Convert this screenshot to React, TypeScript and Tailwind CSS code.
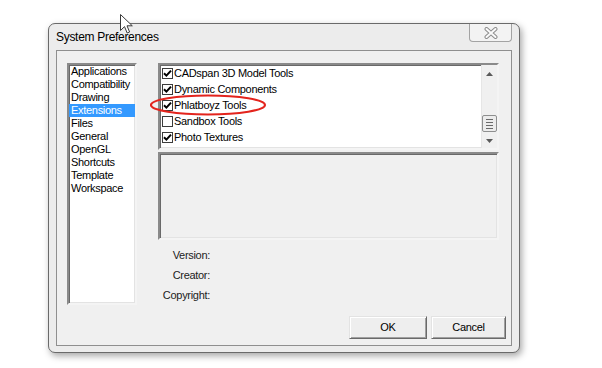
import React from "react";

const sunken =
  "border-2 border-t-[#8a8a8a] border-l-[#8a8a8a] border-b-[#f4f4f4] border-r-[#f4f4f4] shadow-[inset_1px_1px_0_#696969,inset_-1px_-1px_0_#e3e3e3]";

function Check({ on }: { on: boolean }) {
  return (
    <div className="w-[11px] h-[11px] bg-white border border-[#3c3c3c] flex items-center justify-center shrink-0">
      {on && (
        <svg width="9" height="9" viewBox="0 0 9 9">
          <path d="M1 4.2 L3.4 6.6 L8 1.6" stroke="#000" strokeWidth="2" fill="none" />
        </svg>
      )}
    </div>
  );
}

function Btn({ label, w }: { label: string; w: string }) {
  return (
    <div
      className={`${w} h-[23px] flex items-center justify-center text-[11px] text-black bg-[#eeeeee] border border-t-[#e3e3e3] border-l-[#e3e3e3] border-b-[#696969] border-r-[#696969] shadow-[inset_1px_1px_0_#ffffff,inset_-1px_-1px_0_#a0a0a0]`}
    >
      {label}
    </div>
  );
}

export default function App() {
  const left = [
    "Applications",
    "Compatibility",
    "Drawing",
    "Extensions",
    "Files",
    "General",
    "OpenGL",
    "Shortcuts",
    "Template",
    "Workspace",
  ];
  const exts: [string, boolean][] = [
    ["CADspan 3D Model Tools", true],
    ["Dynamic Components", true],
    ["Phlatboyz Tools", true],
    ["Sandbox Tools", false],
    ["Photo Textures", true],
  ];
  return (
    <div className="relative w-[602px] h-[368px] bg-white overflow-hidden font-['Liberation_Sans',Arial,sans-serif] tracking-[-0.3px]">
      <div className="pt-[23px] pl-[48px]">
        <div className="w-[472px] h-[330px] rounded-[7px] border border-[#6a6a6a] bg-[#ececec] shadow-[2px_3px_7px_rgba(0,0,0,0.35)] flex flex-col px-[7px] pb-[6px]">
          {/* title bar */}
          <div className="h-[26px] flex items-start justify-between">
            <span className="mt-[6px] text-[12px] leading-[15px] text-black">System Preferences</span>
            <div className="w-[43px] h-[18px] border border-t-0 border-[#a3a3a3] rounded-b-[4px] bg-[#f3f3f3] flex items-center justify-center">
              <svg width="14" height="12" viewBox="0 0 14 12">
                <path d="M2.5 2 L11.5 10 M11.5 2 L2.5 10" stroke="#8d8d8d" strokeWidth="4" strokeLinecap="round" />
                <path d="M2.5 2 L11.5 10 M11.5 2 L2.5 10" stroke="#fafafa" strokeWidth="2" strokeLinecap="round" />
              </svg>
            </div>
          </div>
          {/* client */}
          <div className="flex-1 border border-[#8f8f8f] bg-[#f0f0f0] flex flex-col pl-[10px] pt-[12px] pr-[5px]">
            <div className="flex gap-[21px]">
              <div className={`w-[70px] h-[242px] bg-white ${sunken}`}>
                {left.map((t) => (
                  <div
                    key={t}
                    className={`h-[13px] leading-[13px] text-[11px] pl-[2px] ${
                      t === "Extensions" ? "bg-[#3399ff] text-white" : "text-black"
                    }`}
                  >
                    {t}
                  </div>
                ))}
              </div>
              <div className="w-[341px] flex flex-col">
                <div className={`h-[87px] bg-white flex ${sunken}`}>
                  <div className="flex-1 pt-0">
                    {exts.map(([t, on]) => (
                      <div key={t} className="h-[16px] flex items-center pl-[2px] gap-[1px]">
                        <Check on={on} />
                        <span className="text-[11px] leading-[14px] text-black">{t}</span>
                      </div>
                    ))}
                  </div>
                  <div className="w-[16px] bg-[#f0f0f0] border-l border-[#e6e6e6] flex flex-col items-center">
                    <div className="h-[17px] flex items-center justify-center">
                      <svg width="7" height="4" viewBox="0 0 7 4">
                        <path d="M0 4 L3.5 0 L7 4 Z" fill="#5a5a5a" />
                      </svg>
                    </div>
                    <div className="flex-1 w-full flex flex-col justify-end">
                      <div className="h-[17px] w-[15px] mb-[2px] border border-[#8e8f8f] rounded-[2px] bg-[#ececec] flex flex-col items-center justify-center gap-[2px]">
                        <div className="w-[7px] h-[1px] bg-[#6a6a6a]" />
                        <div className="w-[7px] h-[1px] bg-[#6a6a6a]" />
                        <div className="w-[7px] h-[1px] bg-[#6a6a6a]" />
                        <div className="w-[7px] h-[1px] bg-[#6a6a6a]" />
                      </div>
                    </div>
                    <div className="h-[14px] flex items-center justify-center">
                      <svg width="7" height="4" viewBox="0 0 7 4">
                        <path d="M0 0 L3.5 4 L7 0 Z" fill="#5a5a5a" />
                      </svg>
                    </div>
                  </div>
                </div>
                <div className={`mt-[2px] h-[88px] bg-[#f0f0f0] ${sunken}`} />
                <div className="mt-[5px] w-[52px] flex flex-col text-right text-[11px] text-[#222]">
                  <div className="h-[20px] leading-[20px]">Version:</div>
                  <div className="h-[20px] leading-[20px]">Creator:</div>
                  <div className="h-[20px] leading-[20px]">Copyright:</div>
                </div>
              </div>
            </div>
            <div className="mt-[11px] flex justify-end gap-[4px]">
              <Btn label="OK" w="w-[78px]" />
              <Btn label="Cancel" w="w-[75px]" />
            </div>
          </div>
        </div>
      </div>
      {/* red annotation ellipse */}
      <svg className="absolute left-[148px] top-[93px]" width="120" height="24" viewBox="0 0 120 24">
        <ellipse cx="60" cy="12" rx="57" ry="9.5" stroke="#e3241d" strokeWidth="2.2" fill="none" />
      </svg>
      {/* mouse cursor */}
      <svg className="absolute left-[120px] top-[14px]" width="14" height="21" viewBox="0 0 14 21">
        <path
          d="M0.5 0.5 L0.5 16.5 L4.5 12.6 L7.2 19 L9.6 18 L7 11.8 L12.3 11.8 Z"
          fill="#ffffff"
          stroke="#3a3a3a"
          strokeWidth="1"
          strokeLinejoin="round"
        />
      </svg>
    </div>
  );
}
